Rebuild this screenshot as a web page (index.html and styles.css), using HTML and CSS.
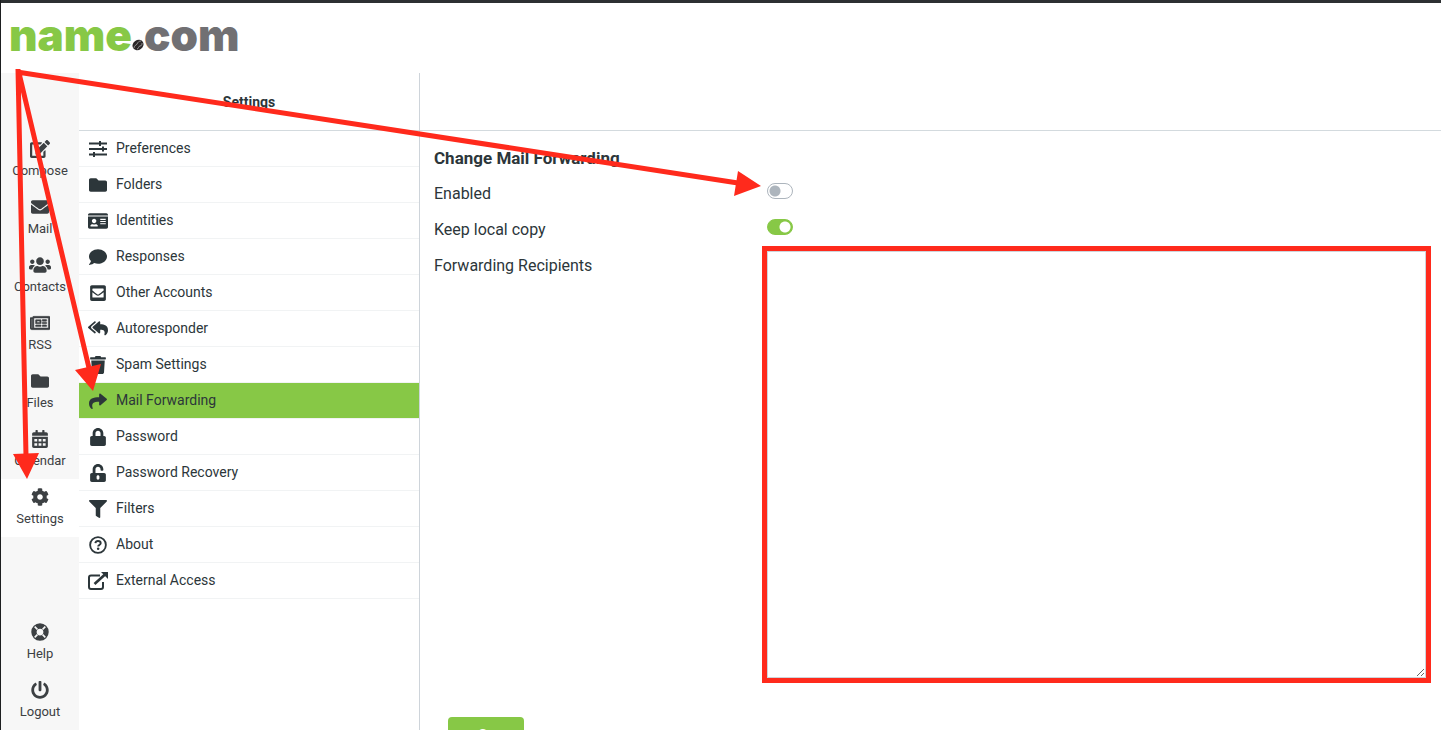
FILE: index.html
```html
<!DOCTYPE html>
<html lang="en">
<head>
    <meta charset="UTF-8">
    <meta name="viewport" content="width=device-width, initial-scale=1.0">
    <title>Settings - Mail Forwarding</title>
    <link rel="stylesheet" href="styles.css">
</head>
<body>
    <header class="topbar">
        <a href="#" class="logo"><span class="logo-name">name</span><svg class="logo-ball" viewBox="0 0 12 12"><ellipse cx="6" cy="6" rx="5.800" ry="4.900" transform="rotate(-35 6 6)" fill="#2b2728"/><path d="M2 9c0-3 2-2 3-4s2-3 4-3M5 10c2 0 1-3 3-3s2-2 2-3" fill="none" stroke="#aaa" stroke-width=".8"/></svg><span class="logo-com">com</span></a>
    </header>
    <div class="layout">
        <nav class="taskbar">
            <a href="#"><svg viewBox="0 0 576 512" class="wide"><path d="M402.600 83.200l90.200 90.200c3.800 3.800 3.800 10 0 13.800L274.400 405.600l-92.800 10.300c-12.400 1.400-22.900-9.100-21.500-21.500l10.300-92.800L388.800 83.200c3.800-3.800 10-3.800 13.800 0zm162-22.900l-48.800-48.800c-15.200-15.200-39.900-15.200-55.200 0l-35.400 35.400c-3.800 3.800-3.800 10 0 13.800l90.200 90.200c3.800 3.800 10 3.800 13.800 0l35.400-35.400c15.200-15.300 15.200-40 0-55.200zM384 346.200V448H64V128h229.800c3.200 0 6.200-1.300 8.500-3.500l40-40c7.600-7.600 2.200-20.500-8.500-20.500H48C21.500 64 0 85.500 0 112v352c0 26.500 21.500 48 48 48h352c26.500 0 48-21.500 48-48V306.200c0-10.700-12.900-16-20.500-8.500l-40 40c-2.200 2.300-3.500 5.300-3.500 8.500z"/></svg>Compose</a>
            <a href="#"><svg viewBox="0 0 512 512"><path d="M502.300 190.800c3.900-3.100 9.700-.2 9.700 4.700V400c0 26.500-21.500 48-48 48H48c-26.500 0-48-21.500-48-48V195.600c0-5 5.700-7.800 9.700-4.700 22.400 17.400 52.100 39.500 154.100 113.600 21.100 15.400 56.700 47.800 92.200 47.600 35.700.3 72-32.800 92.300-47.600 102-74.100 131.600-96.300 154-113.700zM256 320c23.200.4 56.600-29.200 73.400-41.400 132.700-96.300 142.800-104.700 173.400-128.700 5.800-4.500 9.200-11.500 9.200-18.900v-19c0-26.500-21.500-48-48-48H48c-26.500 0-48 21.500-48 48v19c0 7.400 3.400 14.300 9.200 18.900 30.600 23.900 40.700 32.400 173.400 128.700 16.800 12.200 50.200 41.800 73.400 41.400z"/></svg>Mail</a>
            <a href="#"><svg viewBox="0 0 640 512" class="wider"><path d="M96 224c35.300 0 64-28.700 64-64s-28.700-64-64-64-64 28.700-64 64 28.700 64 64 64zm448 0c35.300 0 64-28.700 64-64s-28.700-64-64-64-64 28.700-64 64 28.700 64 64 64zm32 32h-64c-17.600 0-33.500 7.100-45.100 18.600 40.300 22.100 68.900 62 75.100 109.400h66c17.700 0 32-14.300 32-32v-32c0-35.300-28.700-64-64-64zm-256 0c61.900 0 112-50.100 112-112S381.900 32 320 32 208 82.100 208 144s50.100 112 112 112zm76.800 32h-8.300c-20.800 10-43.900 16-68.500 16s-47.600-6-68.500-16h-8.300C179.600 288 128 339.600 128 403.200V432c0 26.500 21.500 48 48 48h288c26.500 0 48-21.500 48-48v-28.800c0-63.600-51.600-115.200-115.200-115.200zm-223.700-13.400C161.500 263.100 145.600 256 128 256H64c-35.300 0-64 28.700-64 64v32c0 17.700 14.300 32 32 32h65.900c6.300-47.400 34.900-87.300 75.200-109.400z"/></svg>Contacts</a>
            <a href="#"><svg viewBox="0 0 576 512" class="wide"><path fill-rule="evenodd" d="M552 64H112c-20.900 0-38.700 13.400-45.300 32H24c-13.300 0-24 10.700-24 24v272c0 30.900 25.100 56 56 56h496c13.300 0 24-10.700 24-24V88c0-13.300-10.700-24-24-24zM48 392V144h16v248c0 4.400-3.600 8-8 8s-8-3.600-8-8zm480 8H111.400c.4-2.600.6-5.300.6-8V112h416v288zM172 280h136c6.600 0 12-5.400 12-12v-96c0-6.600-5.400-12-12-12H172c-6.600 0-12 5.400-12 12v96c0 6.600 5.400 12 12 12zm28-80h80v40h-80v-40zM160 348v-24c0-6.600 5.400-12 12-12h136c6.600 0 12 5.400 12 12v24c0 6.600-5.400 12-12 12H172c-6.600 0-12-5.400-12-12zm192 0v-24c0-6.600 5.400-12 12-12h104c6.600 0 12 5.400 12 12v24c0 6.600-5.400 12-12 12H364c-6.600 0-12-5.400-12-12zm0-80v-24c0-6.600 5.400-12 12-12h104c6.600 0 12 5.400 12 12v24c0 6.600-5.400 12-12 12H364c-6.600 0-12-5.400-12-12zm0-76v-24c0-6.600 5.400-12 12-12h104c6.600 0 12 5.400 12 12v24c0 6.600-5.400 12-12 12H364c-6.600 0-12-5.400-12-12z" stroke="currentColor" stroke-width="14"/></svg>RSS</a>
            <a href="#"><svg viewBox="0 0 512 512"><path d="M464 128H272l-64-64H48C21.500 64 0 85.500 0 112v288c0 26.500 21.500 48 48 48h416c26.500 0 48-21.500 48-48V176c0-26.500-21.500-48-48-48z"/></svg>Files</a>
            <a href="#"><svg viewBox="0 0 448 512"><path fill-rule="evenodd" d="M0 464c0 26.500 21.500 48 48 48h352c26.500 0 48-21.500 48-48V192H0v272zM64 256h80v72H64zM184 256h80v72h-80zM304 256h80v72h-80zM64 376h80v72H64zM184 376h80v72h-80zM304 376h80v72h-80zM400 64h-48V16c0-8.800-7.200-16-16-16h-32c-8.800 0-16 7.200-16 16v48H160V16c0-8.800-7.200-16-16-16h-32c-8.800 0-16 7.200-16 16v48H48C21.500 64 0 85.500 0 112v48h448v-48c0-26.500-21.500-48-48-48z"/></svg>Calendar</a>
            <a href="#" class="selected"><svg viewBox="0 0 512 512"><path d="M487.400 315.700l-42.600-24.600c4.300-23.200 4.300-47 0-70.200l42.600-24.600c4.900-2.800 7.100-8.600 5.500-14-11.100-35.600-30-67.800-54.700-94.600-3.800-4.100-10-5.100-14.800-2.300L380.800 110c-17.900-15.400-38.500-27.300-60.800-35.100V25.800c0-5.600-3.900-10.500-9.400-11.700-36.700-8.200-74.300-7.800-109.200 0-5.500 1.200-9.400 6.100-9.400 11.700V75c-22.200 7.900-42.800 19.800-60.800 35.100L88.700 85.500c-4.900-2.800-11-1.900-14.800 2.300-24.700 26.700-43.600 58.900-54.700 94.600-1.700 5.400.6 11.200 5.500 14L67.300 221c-4.300 23.200-4.300 47 0 70.200l-42.600 24.600c-4.900 2.800-7.100 8.600-5.500 14 11.100 35.600 30 67.800 54.700 94.600 3.800 4.100 10 5.100 14.800 2.300l42.600-24.600c17.900 15.400 38.500 27.300 60.800 35.100v49.200c0 5.600 3.900 10.500 9.400 11.700 36.700 8.200 74.300 7.800 109.200 0 5.500-1.200 9.400-6.100 9.400-11.700v-49.200c22.200-7.900 42.800-19.800 60.800-35.100l42.600 24.600c4.900 2.800 11 1.900 14.800-2.300 24.700-26.700 43.600-58.900 54.700-94.600 1.500-5.500-.7-11.300-5.600-14.100zM256 336c-44.100 0-80-35.900-80-80s35.900-80 80-80 80 35.900 80 80-35.900 80-80 80z"/></svg>Settings</a>
            <a href="#" class="bottom"><svg viewBox="0 0 512 512"><circle cx="256" cy="256" r="172" fill="none" stroke="currentColor" stroke-width="152"/><path d="M105 105l77 77M407 105l-77 77M105 407l77-77M407 407l-77-77" fill="none" stroke="#f7f7f7" stroke-width="46"/></svg>Help</a>
            <a href="#"><svg viewBox="0 0 512 512"><path d="M400 54.100c63 45 104 118.600 104 201.900 0 136.800-110.800 247.700-247.500 248C120 504.300 8.200 393 8 256.400 7.900 173.100 48.900 99.300 111.800 54.200c11.700-8.300 28-4.800 35 7.700L162.600 90c5.900 10.500 3.100 23.800-6.600 31-41.500 30.800-68 79.600-68 134.900-.1 92.300 74.500 168.100 168 168.100 91.600 0 168.600-74.200 168-169.100-.3-51.800-24.700-101.800-68.100-134-9.700-7.200-12.400-20.500-6.500-30.900l15.800-28.100c7-12.400 23.200-16.100 34.800-7.800zM296 264V24c0-13.300-10.700-24-24-24h-32c-13.300 0-24 10.700-24 24v240c0 13.300 10.700 24 24 24h32c13.300 0 24-10.700 24-24z"/></svg>Logout</a>
        </nav>
        <section class="sections">
            <h2>Settings</h2>
            <ul>
                <li><a href="#"><svg viewBox="0 0 18 18"><path d="M0 3.500h18M0 9h18M0 14.500h18" fill="none" stroke="currentColor" stroke-width="2"/><path d="M10 1h2v5h-2zM13 6.500h2v5h-2zM4 12h2v5H4z"/></svg>Preferences</a></li>
                <li><a href="#"><svg viewBox="0 0 512 512"><path d="M464 128H272l-64-64H48C21.500 64 0 85.500 0 112v288c0 26.500 21.500 48 48 48h416c26.500 0 48-21.500 48-48V176c0-26.500-21.500-48-48-48z"/></svg>Folders</a></li>
                <li><a href="#"><svg viewBox="0 0 576 512"><path fill-rule="evenodd" d="M528 32H48C21.500 32 0 53.500 0 80v16h576V80c0-26.500-21.500-48-48-48zM0 432c0 26.500 21.500 48 48 48h480c26.500 0 48-21.500 48-48V128H0v304zm352-232c0-4.400 3.600-8 8-8h144c4.400 0 8 3.600 8 8v16c0 4.400-3.600 8-8 8H360c-4.400 0-8-3.600-8-8v-16zm0 64c0-4.400 3.600-8 8-8h144c4.400 0 8 3.600 8 8v16c0 4.400-3.600 8-8 8H360c-4.400 0-8-3.600-8-8v-16zm0 64c0-4.400 3.600-8 8-8h144c4.400 0 8 3.600 8 8v16c0 4.400-3.600 8-8 8H360c-4.400 0-8-3.600-8-8v-16zM176 192c35.300 0 64 28.700 64 64s-28.700 64-64 64-64-28.700-64-64 28.700-64 64-64zM67.100 396.200C75.500 370.500 99.600 352 128 352h8.200c12.300 5.100 25.700 8 39.800 8s27.600-2.900 39.800-8h8.200c28.400 0 52.500 18.500 60.900 44.200 3.200 9.900-5.200 19.800-15.600 19.800H82.700c-10.400 0-18.800-10-15.600-19.800z"/></svg>Identities</a></li>
                <li><a href="#"><svg viewBox="0 0 512 512"><path d="M256 32C114.600 32 0 125.100 0 240c0 49.600 21.400 95 57 130.700C44.500 421.100 2.700 466 2.200 466.500c-2.200 2.300-2.800 5.700-1.500 8.700S4.800 480 8 480c66.300 0 116-31.800 140.600-51.400 32.700 12.300 69 19.400 107.400 19.400 141.400 0 256-93.100 256-208S397.400 32 256 32z"/></svg>Responses</a></li>
                <li><a href="#"><svg viewBox="0 0 448 512"><path fill-rule="evenodd" d="M48 32h352c26.500 0 48 21.500 48 48v352c0 26.500-21.500 48-48 48H48c-26.500 0-48-21.500-48-48V80c0-26.500 21.500-48 48-48zm16 112v40c50 42 110 88 135 105 15 10 35 10 50 0 25-17 85-63 135-105v-40c0-9-7-16-16-16H80c-9 0-16 7-16 16zm0 90v134c0 9 7 16 16 16h288c9 0 16-7 16-16V234c-40 32-75 58-105 81-33 25-77 25-110 0-30-23-65-49-105-81z"/></svg>Other Accounts</a></li>
                <li><a href="#"><svg viewBox="0 0 576 512"><path d="M136.300 226.500l176 151.900c15.400 13.300 39.700 2.500 39.700-18.200v-80.100c108 2 146 33 120 134-5 18 16 32 31 21 46-34 73-87 73-145 0-134-99-168-224-170V56c0-20.700-24.300-31.500-39.700-18.200l-176 152c-11.100 9.600-11.100 27-.0 36.700z"/><path d="M8.300 226.500l176 151.900c15.400 13.300 39.700 2.500 39.700-18.200v-15.800L100 238c-17-15-17-45 0-60L224 72V56c0-20.700-24.300-31.500-39.700-18.200l-176 152c-11.100 9.600-11.100 27 0 36.700z"/></svg>Autoresponder</a></li>
                <li><a href="#"><svg viewBox="0 0 448 512"><path d="M432 32H312l-9.400-18.700C298.500 5.100 290.100 0 281.100 0H166.800c-9 0-17.400 5.100-21.400 13.300L136 32H16C7.200 32 0 39.200 0 48v32c0 8.800 7.200 16 16 16h416c8.800 0 16-7.200 16-16V48c0-8.800-7.200-16-16-16zM53.200 467c1.600 25.300 22.600 45 47.900 45h245.800c25.300 0 46.300-19.700 47.900-45L416 128H32z"/></svg>Spam Settings</a></li>
                <li class="selected"><a href="#"><svg viewBox="0 0 512 512"><path d="M503.700 226.200l-176 152c-15.400 13.300-39.700 2.500-39.700-18.200v-80C127.400 281.900 60.200 316.600 105.500 461.500c5 16.100-14.400 28.600-28.100 18.600C33.700 448.200 0 390.800 0 331.800 0 185.900 122.100 154.600 288 152.700V69c0-20.700 24.300-31.500 39.700-18.200l176 139c11.100 9.600 11.100 26.800 0 36.400z"/></svg>Mail Forwarding</a></li>
                <li><a href="#"><svg viewBox="0 0 448 512"><path d="M400 224h-24v-72C376 68.200 307.800 0 224 0S72 68.200 72 152v72H48c-26.500 0-48 21.500-48 48v192c0 26.500 21.500 48 48 48h352c26.500 0 48-21.500 48-48V272c0-26.500-21.500-48-48-48zm-104 0H152v-72c0-39.700 32.300-72 72-72s72 32.300 72 72v72z"/></svg>Password</a></li>
                <li><a href="#"><svg viewBox="0 0 448 512"><path d="M400 256H152V152.900c0-39.600 31.700-72.500 71.300-72.900 40-.4 72.700 32.100 72.700 72v16c0 13.300 10.700 24 24 24h32c13.300 0 24-10.700 24-24v-16C376 68 307.500-.3 223.500 0 139.500.3 72 69.500 72 153.500V256H48c-26.500 0-48 21.500-48 48v160c0 26.500 21.500 48 48 48h352c26.500 0 48-21.500 48-48V304c0-26.500-21.500-48-48-48zM264 408c0 22.100-17.900 40-40 40s-40-17.900-40-40v-48c0-22.100 17.900-40 40-40s40 17.900 40 40v48z"/></svg>Password Recovery</a></li>
                <li><a href="#"><svg viewBox="0 0 512 512"><path d="M488 0H24C2.700 0-8 25.900 7.100 41L192 225.900V432c0 7.800 3.800 15.200 10.200 19.700l80 56C298 518.700 320 507.500 320 488V225.900l184.900-185C520 25.900 509.300 0 488 0z"/></svg>Filters</a></li>
                <li><a href="#"><svg viewBox="0 0 512 512"><circle cx="256" cy="256" r="224" fill="none" stroke="currentColor" stroke-width="52"/><path d="M180 202c8-38 38-60 76-60 45 0 76 27 76 63 0 50-70 52-70 94" fill="none" stroke="currentColor" stroke-width="56"/><circle cx="260" cy="362" r="36"/></svg>About</a></li>
                <li><a href="#"><svg viewBox="0 0 20 18"><path d="M12 3.500H3Q1 3.500 1 5.500V15Q1 17 3 17H13Q15 17 15 15V10" fill="none" stroke="currentColor" stroke-width="2"/><path d="M6.500 12L17 2.500" stroke="currentColor" stroke-width="2.600"/><path d="M13 0h7v7z"/></svg>External Access</a></li>
            </ul>
        </section>
        <main class="content">
            <div class="content-header"></div>
            <form>
                <h3>Change Mail Forwarding</h3>
                <div class="row">
                    <label for="enabled">Enabled</label>
                    <input type="checkbox" id="enabled" class="switch">
                </div>
                <div class="row">
                    <label for="keep">Keep local copy</label>
                    <input type="checkbox" id="keep" class="switch" checked>
                </div>
                <div class="row">
                    <label for="recipients">Forwarding Recipients</label>
                    <textarea id="recipients"></textarea>
                </div>
                <button type="button" class="save"><svg viewBox="0 0 16 16"><path d="M1 9l4 4L14 4" fill="none" stroke="currentColor" stroke-width="3"/></svg>Save</button>
            </form>
        </main>
    </div>
    <!-- arrows pointing at the steps -->
    <svg class="arrows" width="780" height="490" viewBox="0 0 780 490">
        <path d="M17 72L738 183M19 73L89 368M18 69L26 456"/>
        <path class="head" d="M761 186L738 171L734 196ZM93 391L75 370L101 364ZM27 479L13 454L39 453Z"/>
    </svg>
</body>
</html>
```
FILE: styles.css
```css
* {
    box-sizing: border-box;
}
body {
    margin: 0;
    height: 100vh;
    display: flex;
    flex-direction: column;
    overflow: hidden;
    border-left: 1px solid #1d1f20;
    font-family: Roboto, sans-serif;
    font-size: 14px;
    color: #2c363a;
    background: #fff;
}
a {
    color: inherit;
    text-decoration: none;
}
svg {
    fill: currentColor;
    flex-shrink: 0;
}
.topbar {
    height: 73px;
    flex-shrink: 0;
    padding: 2px 8px;
    border-top: 3px solid #2d3032;
}
.logo {
    display: flex;
    align-items: baseline;
    font-family: Inter, sans-serif;
    font-size: 44px;
    font-weight: 900;
    line-height: 60px;
}
.logo-name {
    color: #87c846;
}
.logo-com {
    color: #717073;
}
.logo-ball {
    width: 12px;
    height: 12px;
}
.layout {
    flex: 1;
    min-height: 0;
    display: flex;
}

/* left task menu */
.taskbar {
    width: 78px;
    flex-shrink: 0;
    padding-top: 58px;
    display: flex;
    flex-direction: column;
    background: #f7f7f7;
    color: #3c4043;
    font-size: 13px;
}
.taskbar a {
    height: 58px;
    flex-shrink: 0;
    padding-top: 9px;
    display: flex;
    flex-direction: column;
    align-items: center;
    gap: 5px;
    line-height: 16px;
}
.taskbar svg {
    width: 18px;
    height: 18px;
}
.taskbar svg.wide {
    width: 20px;
}
.taskbar svg.wider {
    width: 22px;
}
.taskbar .selected {
    background: #fff;
}
.taskbar .bottom {
    margin-top: auto;
}

/* settings sections */
.sections {
    width: 341px;
    flex-shrink: 0;
    border-right: 1px solid #ced4da;
}
.sections h2 {
    height: 58px;
    margin: 0;
    border-bottom: 1px solid #d3dade;
    font-size: 14px;
    font-weight: 700;
    line-height: 58px;
    text-align: center;
}
.sections ul {
    margin: 0;
    padding: 0;
    list-style: none;
}
.sections li {
    height: 36px;
    border-bottom: 1px solid #f1f3f4;
}
.sections a {
    display: flex;
    align-items: center;
    gap: 8px;
    padding-left: 9px;
    line-height: 35px;
}
.sections li svg {
    width: 20px;
    height: 18px;
}
.sections .selected {
    background: #87c846;
}

/* form */
.content {
    flex: 1;
    min-width: 0;
    font-size: 16px;
}
.content-header {
    height: 58px;
    border-bottom: 1px solid #d3dade;
}
form {
    padding: 9px 15px 0 14px;
}
h3 {
    margin: 0;
    font-size: 17px;
    font-weight: 700;
    line-height: 36px;
}
.row {
    min-height: 36px;
    display: grid;
    grid-template-columns: 333px 1fr;
    align-items: start;
}
.row label {
    line-height: 36px;
}
.switch {
    appearance: none;
    width: 26px;
    height: 16px;
    margin: 7px 0 0;
    border: 1px solid #adb5bd;
    border-radius: 8px;
    background: radial-gradient(circle at 7px 7px, #adb5bd 5px, transparent 6px);
}
.switch:checked {
    border-color: #87c846;
    background: radial-gradient(circle at 17px 7px, #fff 5px, #87c846 6px);
}
textarea {
    display: block;
    width: 100%;
    height: 427px;
    margin: 3px 0 0;
    border: 1px solid #ced4da;
    outline: 5px solid #ff2a1c;
    background: #fff;
    font: inherit;
}
.save {
    display: flex;
    align-items: center;
    gap: 2px;
    margin: 39px 0 0 14px;
    padding: 9px 12px;
    border: 0;
    border-radius: 4px;
    background: #87c846;
    color: #fff;
    font: inherit;
    line-height: 20px;
}
.save svg {
    width: 16px;
    height: 16px;
}
.arrows {
    position: absolute;
    top: 0;
    left: 0;
    fill: none;
    stroke: #ff2a1c;
    stroke-width: 5;
    pointer-events: none;
}
.arrows .head {
    fill: #ff2a1c;
    stroke: none;
}
```
